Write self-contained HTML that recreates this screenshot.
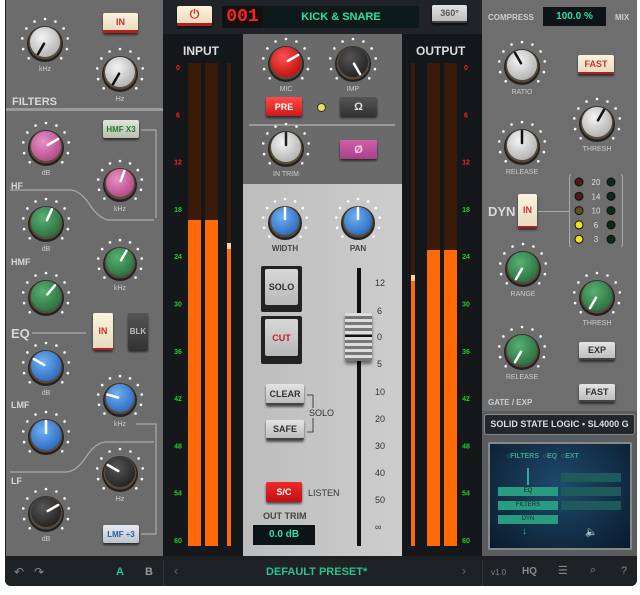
<!DOCTYPE html>
<html><head><meta charset="utf-8">
<style>
*{box-sizing:border-box;margin:0;padding:0}
body{width:640px;height:595px;background:#fff;position:relative;overflow:hidden;font-family:"Liberation Sans",sans-serif}
.a{position:absolute}
.lbl{position:absolute;color:#d8d8d8;font-weight:bold}
.btn{position:absolute;border-radius:2px;font-size:9px;font-weight:bold;display:flex;align-items:center;justify-content:center;box-shadow:0 2px 2px rgba(0,0,0,.6)}
.cream{background:linear-gradient(#fbf3dc,#e8dcc0);color:#d03030;border-bottom:3px solid #b02020}
.grey{background:linear-gradient(#e4e4e4,#bdbdbd);color:#333;border-bottom:2px solid #444}
.small{font-size:6px;color:#ddd;position:absolute}
.mn{position:absolute;font-size:7px;font-weight:bold}
.sc{position:absolute;font-size:9px;color:#333}
</style></head><body>
<!-- frame -->
<div class="a" style="left:5px;top:0;width:632px;height:586px;background:#1d2023;border-radius:0 0 6px 6px"></div>
<!-- left panel -->
<div class="a" style="left:6px;top:0;width:157px;height:556px;background:#6c6c6c"></div>
<div class="a" style="left:6px;top:108px;width:157px;height:3px;background:#9a9a9a"></div>
<div class="lbl" style="left:12px;top:96px;font-size:11px">FILTERS</div>
<div class="lbl" style="left:11px;top:181px;font-size:9px">HF</div>
<div class="lbl" style="left:11px;top:257px;font-size:9px">HMF</div>
<div class="lbl" style="left:11px;top:326px;font-size:13px">EQ</div>
<div class="lbl" style="left:11px;top:400px;font-size:9px">LMF</div>
<div class="lbl" style="left:11px;top:476px;font-size:9px">LF</div>
<svg class="a" style="left:6px;top:0" width="157" height="556">
<path d="M4 190 H64 Q74 190 84 205 Q94 220 104 220 H148" stroke="#aaa" stroke-width="1.2" fill="none"/>
<path d="M135 130 H150 V218" stroke="#aaa" stroke-width="1.2" fill="none"/>
<path d="M26 333 H80" stroke="#aaa" stroke-width="1.2" fill="none"/>
<path d="M4 472 H60 Q70 472 80 457 Q90 442 100 442 H148" stroke="#aaa" stroke-width="1.2" fill="none"/>
<path d="M130 424 H150 V534 H135" stroke="#aaa" stroke-width="1.2" fill="none"/>
</svg>
<div class="btn cream" style="left:103px;top:13px;width:35px;height:20px">IN</div>
<div class="btn" style="left:103px;top:120px;width:36px;height:18px;background:linear-gradient(#dfe6d8,#b8c0b0);color:#2a7a2a;font-size:8px">HMF X3</div>
<div class="btn cream" style="left:93px;top:313px;width:20px;height:37px;border-bottom-width:2px">IN</div>
<div class="btn" style="left:128px;top:313px;width:20px;height:37px;background:linear-gradient(#555,#333);color:#bbb;font-size:8px">BLK</div>
<div class="btn" style="left:103px;top:525px;width:36px;height:18px;background:linear-gradient(#e6ecf2,#bcc4cc);color:#2a5a9a;font-size:8px">LMF ÷3</div>

<!-- center top bar -->
<div class="a" style="left:163px;top:0;width:319px;height:34px;background:#202428"></div>
<div class="btn cream" style="left:177px;top:6px;width:35px;height:20px;font-size:12px">⏻</div>
<div class="a" style="left:222px;top:6px;width:41px;height:22px;background:#111;color:#ff2020;font:bold 18px 'Liberation Mono',monospace;line-height:22px;text-align:center">001</div>
<div class="a" style="left:263px;top:6px;width:156px;height:22px;background:#0e1a1a;color:#2ee0a0;font-size:11px;font-weight:bold;line-height:22px;text-align:center">KICK &amp; SNARE</div>
<div class="btn grey" style="left:432px;top:5px;width:35px;height:18px;color:#555">360°</div>
<!-- input meter -->
<div class="a" style="left:163px;top:34px;width:80px;height:522px;background:#15181b"></div>
<div class="lbl" style="left:183px;top:44px;font-size:12px;color:#ddd">INPUT</div>
<!-- output meter -->
<div class="a" style="left:402px;top:34px;width:80px;height:522px;background:#15181b"></div>
<div class="lbl" style="left:416px;top:44px;font-size:12px;color:#ddd">OUTPUT</div>
<!-- center strip -->
<div class="a" style="left:243px;top:34px;width:159px;height:150px;background:#6a6a6a"></div>
<div class="a" style="left:249px;top:124px;width:146px;height:2px;background:#999"></div>
<div class="a" style="left:243px;top:184px;width:159px;height:372px;background:linear-gradient(90deg,#bdbdbd,#cdcdcd)"></div>
<div class="btn" style="left:266px;top:97px;width:36px;height:19px;background:linear-gradient(#ff4a4a,#d01818);color:#fff">PRE</div>
<div class="a" style="left:317px;top:103px;width:9px;height:9px;border-radius:50%;background:#e8e060;border:1px solid #333"></div>
<div class="btn" style="left:340px;top:97px;width:37px;height:19px;background:linear-gradient(#555,#333);color:#ddd;font-size:11px">Ω</div>
<div class="btn" style="left:340px;top:140px;width:37px;height:19px;background:linear-gradient(#d060a8,#a84088);color:#f4d0e8;font-size:11px">Ø</div>
<div class="a" style="left:261px;top:266px;width:41px;height:46px;background:#222;border-radius:2px"></div>
<div class="btn" style="left:265px;top:269px;width:33px;height:36px;background:linear-gradient(#d8d8d8,#b8b8b8);color:#333;box-shadow:none">SOLO</div>
<div class="a" style="left:261px;top:316px;width:41px;height:48px;background:#222;border-radius:2px"></div>
<div class="btn" style="left:265px;top:319px;width:33px;height:37px;background:linear-gradient(#d8d8d8,#b8b8b8);color:#c02020;box-shadow:none">CUT</div>
<div class="btn grey" style="left:266px;top:384px;width:38px;height:21px">CLEAR</div>
<div class="btn grey" style="left:266px;top:420px;width:38px;height:20px">SAFE</div>
<svg class="a" style="left:305px;top:390px" width="20" height="50"><path d="M2 5 H8 V18 M2 42 H8 V28" stroke="#444" fill="none"/></svg>
<div class="sc" style="left:309px;top:408px;font-size:9px;color:#333">SOLO</div>
<div class="btn" style="left:266px;top:482px;width:36px;height:20px;background:linear-gradient(#ee2a2a,#c01010);color:#fff">S/C</div>
<div class="sc" style="left:308px;top:488px;font-size:9px">LISTEN</div>
<div class="sc" style="left:263px;top:511px;font-size:9px;font-weight:bold;color:#444">OUT TRIM</div>
<div class="a" style="left:253px;top:525px;width:62px;height:20px;background:#0c1418;color:#2ee0a0;font-size:10px;font-weight:bold;text-align:center;line-height:20px">0.0 dB</div>
<div class="a" style="left:357px;top:268px;width:4px;height:278px;background:#111"></div>
<div class="a" style="left:345px;top:313px;width:27px;height:48px;background:repeating-linear-gradient(#ddd 0 3px,#777 3px 6px);box-shadow:0 3px 3px rgba(0,0,0,.5);border-radius:2px"></div>
<div class="a" style="left:345px;top:335px;width:27px;height:2px;background:#111"></div>
<div class="sc" style="left:375px;top:278px">12</div>
<div class="sc" style="left:377px;top:306px">6</div>
<div class="sc" style="left:377px;top:332px">0</div>
<div class="sc" style="left:377px;top:359px">5</div>
<div class="sc" style="left:375px;top:387px">10</div>
<div class="sc" style="left:375px;top:414px">20</div>
<div class="sc" style="left:375px;top:441px">30</div>
<div class="sc" style="left:375px;top:468px">40</div>
<div class="sc" style="left:375px;top:495px">50</div>
<div class="sc" style="left:375px;top:522px">∞</div>

<!-- right panel -->
<div class="a" style="left:482px;top:0;width:155px;height:411px;background:#6e6e6e"></div>
<div class="lbl" style="left:488px;top:13px;font-size:8px;color:#ccc">COMPRESS</div>
<div class="a" style="left:543px;top:7px;width:63px;height:19px;background:#0c1418;color:#2ee0a0;font-size:10px;font-weight:bold;text-align:center;line-height:19px">100.0 %</div>
<div class="lbl" style="left:615px;top:13px;font-size:8px;color:#ccc">MIX</div>
<div class="btn cream" style="left:578px;top:55px;width:36px;height:19px;border-bottom-width:2px">FAST</div>
<div class="lbl" style="left:488px;top:204px;font-size:13px">DYN</div>
<div class="btn cream" style="left:518px;top:194px;width:19px;height:34px;border-bottom-width:2px">IN</div>
<div class="a" style="left:538px;top:211px;width:32px;height:1px;background:#aaa"></div>
<div class="a" style="left:569px;top:172px;width:54px;height:77px;border:1px solid #aaa;border-radius:5px;border-top-color:transparent;border-bottom-color:transparent"></div>
<div class="btn grey" style="left:579px;top:342px;width:36px;height:18px">EXP</div>
<div class="btn grey" style="left:579px;top:384px;width:36px;height:18px">FAST</div>
<div class="lbl" style="left:488px;top:398px;font-size:8px;color:#ccc">GATE / EXP</div>
<div class="a" style="left:482px;top:411px;width:155px;height:145px;background:#5a5d60"></div>
<div class="a" style="left:484px;top:414px;width:151px;height:21px;background:#22272b;border:1px solid #888;border-radius:3px;color:#ddd;font-size:9px;font-weight:bold;line-height:19px;text-align:center">SOLID STATE LOGIC • SL4000 G</div>
<div class="a" style="left:488px;top:442px;width:144px;height:108px;background:#888;border-radius:2px"></div>
<div class="a" style="left:490px;top:444px;width:140px;height:104px;background:radial-gradient(ellipse at 50% 40%,#1f4a6e,#0a1a2c)"></div>
<div class="a" style="left:506px;top:453px;font-size:7px;color:#3aa890;font-weight:bold">○FILTERS &nbsp;○EQ &nbsp;○EXT</div>
<div class="a" style="left:527px;top:468px;width:2px;height:17px;background:#3aa890"></div>
<div class="a" style="left:498px;top:487px;width:60px;height:9px;background:#2a9a80;color:#0b2a2a;font-size:6px;text-align:center;line-height:9px">EQ</div>
<div class="a" style="left:498px;top:501px;width:60px;height:9px;background:#2a9a80;color:#0b2a2a;font-size:6px;text-align:center;line-height:9px">FILTERS</div>
<div class="a" style="left:498px;top:515px;width:60px;height:9px;background:#2a9a80;color:#0b2a2a;font-size:6px;text-align:center;line-height:9px">DYN</div>
<div class="a" style="left:561px;top:473px;width:60px;height:9px;background:#1e5a5a"></div>
<div class="a" style="left:561px;top:487px;width:60px;height:9px;background:#1e5a5a"></div>
<div class="a" style="left:561px;top:501px;width:60px;height:9px;background:#1e5a5a"></div>
<div class="a" style="left:522px;top:526px;color:#3ab8a0;font-size:10px">↓</div>
<div class="a" style="left:585px;top:527px;color:#2a6a80;font-size:10px">🔈</div>

<!-- bottom bar -->
<div class="a" style="left:5px;top:560px;width:632px;height:26px;background:#1e2225;border-radius:0 0 6px 6px"></div>
<div class="a" style="left:163px;top:560px;width:1px;height:26px;background:#333"></div>
<div class="a" style="left:482px;top:560px;width:1px;height:26px;background:#333"></div>
<div class="a" style="left:14px;top:565px;color:#888;font-size:12px">↶ &nbsp; ↷</div>
<div class="a" style="left:116px;top:566px;color:#2ec090;font-size:11px;font-weight:bold">A</div>
<div class="a" style="left:145px;top:566px;color:#999;font-size:11px;font-weight:bold">B</div>
<div class="a" style="left:174px;top:564px;color:#666;font-size:12px">‹</div>
<div class="a" style="left:266px;top:566px;color:#2ec090;font-size:11px;font-weight:bold">DEFAULT PRESET*</div>
<div class="a" style="left:462px;top:564px;color:#666;font-size:12px">›</div>
<div class="a" style="left:491px;top:568px;color:#888;font-size:8px">v1.0</div>
<div class="a" style="left:522px;top:566px;color:#888;font-size:10px;font-weight:bold">HQ</div>
<div class="a" style="left:558px;top:564px;color:#888;font-size:11px">☰</div>
<div class="a" style="left:590px;top:564px;color:#888;font-size:11px">⌕</div>
<div class="a" style="left:621px;top:565px;color:#888;font-size:11px">?</div>

<svg id="ov" class="a" style="left:0;top:0" width="640" height="595"></svg>
<script>
var s='';
function knob(cx,cy,r,col,ang,ptr,unit){
  for(var i=0;i<11;i++){var a=(-135+i*27)*Math.PI/180;
    s+='<circle cx="'+(cx+Math.sin(a)*(r+8))+'" cy="'+(cy-Math.cos(a)*(r+8))+'" r="1.3" fill="#fff"/>';}
  s+='<circle cx="'+cx+'" cy="'+(cy+2)+'" r="'+(r+3)+'" fill="#222"/>';
  s+='<circle cx="'+cx+'" cy="'+(cy+1)+'" r="'+(r+1.5)+'" fill="#5a4a3a"/>';
  s+='<circle cx="'+cx+'" cy="'+cy+'" r="'+r+'" fill="url(#g'+col+')"/>';
  var a=ang*Math.PI/180;
  s+='<line x1="'+(cx+Math.sin(a)*2)+'" y1="'+(cy-Math.cos(a)*2)+'" x2="'+(cx+Math.sin(a)*(r-1))+'" y2="'+(cy-Math.cos(a)*(r-1))+'" stroke="'+ptr+'" stroke-width="2.5" stroke-linecap="round"/>';
  if(unit)s+='<text x="'+cx+'" y="'+(cy+r+14)+'" font-size="7" fill="#ccc" text-anchor="middle" font-family="Liberation Sans">'+unit+'</text>';
}
var cols={w:['#f4f4f4','#b0b0b0'],p:['#e890c8','#b04888'],g:['#58b070','#2a7040'],b:['#70b0f0','#2a6ac0'],k:['#555','#222'],r:['#ff5050','#c01010']};
var d='<defs>';for(var k in cols)d+='<radialGradient id="g'+k+'" cx="40%" cy="35%" r="70%"><stop offset="0" stop-color="'+cols[k][0]+'"/><stop offset="1" stop-color="'+cols[k][1]+'"/></radialGradient>';d+='</defs>';
knob(45,42,15,'w',-150,'#111','kHz');knob(120,72,15,'w',-150,'#111','Hz');
knob(46,146,15,'p',60,'#fff','dB');knob(120,183,14,'p',20,'#fff','kHz');
knob(46,222,15,'g',25,'#fff','dB');knob(120,262,14,'g',30,'#fff','kHz');
knob(46,296,15,'g',40,'#fff','');
knob(46,366,15,'b',-60,'#fff','dB');knob(120,398,14,'b',-75,'#fff','kHz');
knob(46,435,15,'b',0,'#fff','');knob(120,472,15,'k',-60,'#fff','Hz');knob(46,512,15,'k',60,'#fff','dB');
knob(286,62,15,'r',60,'#fff','MIC');knob(353,62,15,'k',150,'#fff','IMP');knob(286,147,15,'w',0,'#222','IN TRIM');
knob(285,221,14,'b',0,'#fff','');knob(358,221,14,'b',0,'#fff','');
knob(522,65,15,'w',-30,'#111','RATIO');knob(597,122,15,'w',30,'#111','THRESH');knob(522,145,15,'w',0,'#111','RELEASE');
knob(523,267,15,'g',-150,'#fff','RANGE');knob(597,296,15,'g',-150,'#fff','THRESH');knob(522,350,15,'g',-150,'#fff','RELEASE');
// labels extra
s+='<text x="285" y="251" font-size="8" font-weight="bold" fill="#444" text-anchor="middle" font-family="Liberation Sans">WIDTH</text>';
s+='<text x="358" y="251" font-size="8" font-weight="bold" fill="#444" text-anchor="middle" font-family="Liberation Sans">PAN</text>';
// meters
function meter(xs,ws,tops){for(var i=0;i<xs.length;i++){s+='<rect x="'+xs[i]+'" y="63" width="'+ws[i]+'" height="483" fill="#3a1a08"/><rect x="'+xs[i]+'" y="'+tops[i]+'" width="'+ws[i]+'" height="'+(546-tops[i])+'" fill="#ff6a08"/>';}}
meter([188,205,227],[13,13,4],[220,220,245]);meter([411,427,444],[4,13,13],[277,250,250]);
s+='<rect x="227" y="243" width="4" height="6" fill="#ffd0a0"/><rect x="411" y="275" width="4" height="6" fill="#ffd0a0"/>';
var nums=[0,6,12,18,24,30,36,42,48,54,60];
for(var i=0;i<11;i++){var y=70+i*47.3;var c=i<3?'#ff2020':'#20d020';
 s+='<text x="178" y="'+y+'" font-size="7" font-weight="bold" fill="'+c+'" text-anchor="middle" font-family="Liberation Sans">'+nums[i]+'</text>';
 s+='<text x="466" y="'+y+'" font-size="7" font-weight="bold" fill="'+c+'" text-anchor="middle" font-family="Liberation Sans">'+nums[i]+'</text>';}
// LEDs
var lv=[20,14,10,6,3],lc=['#501818','#501818','#5a5018','#f0e020','#f0e020'];
for(var i=0;i<5;i++){var y=182+i*14.3;s+='<circle cx="579" cy="'+y+'" r="4" fill="'+lc[i]+'" stroke="#111"/><circle cx="611" cy="'+y+'" r="4" fill="#0c2a18" stroke="#111"/><text x="596" y="'+(y+3)+'" font-size="8" fill="#ddd" text-anchor="middle" font-family="Liberation Sans">'+lv[i]+'</text>';}
document.getElementById('ov').innerHTML=d+s;
</script>
</body></html>
